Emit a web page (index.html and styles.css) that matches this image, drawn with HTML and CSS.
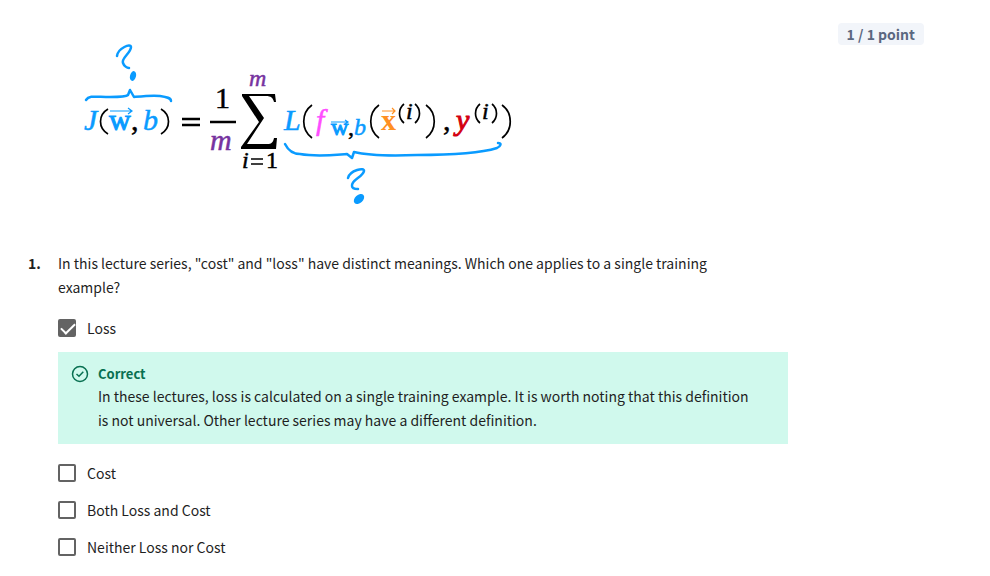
FILE: index.html
```html
<!DOCTYPE html>
<html lang="en">
<head>
<meta charset="utf-8">
<meta name="viewport" content="width=device-width, initial-scale=1">
<title>Practice quiz</title>
<link rel="stylesheet" href="styles.css">
</head>
<body>
<main class="quiz">
  <header class="top">
    <svg class="formula" viewBox="58 23 480 192" width="480" height="192" role="img" aria-label="Cost function J as the average of the losses L">
      <g class="ink">
        <path d="M117 56C118 48 131 43 131 47C131 53 121 58 123 63C124 66 127 68 129 68"/>
        <path d="M86 100C89 95 96 97 110 97C118 97 126 97 128 95L130 90L134 97C144 96 153 95 160 96C167 97 171 98 171 101"/>
        <path d="M285 144C288 150 293 154 300 154C317 157 333 155 347 154L352 158L354 152C366 155 390 156 417 155C451 155 481 153 497 148C501 146 502 143 498 143"/>
        <path d="M348 178C350 170 365 167 364 171C363 177 351 180 352 186C352 188 355 189 358 189"/>
      </g>
      <ellipse class="blue" cx="133" cy="76" rx="3" ry="5" transform="rotate(15 133 76)"/>
      <ellipse class="blue" cx="359" cy="199" rx="4" ry="6" transform="rotate(48 359 199)"/>
      <g class="arrow">
        <path d="M110 111H132M128 108L132 111L128 114"/>
        <path d="M331 122H348M345 120L348 122L345 124"/>
        <path class="arrow-orange" d="M382 111H395M392 108L395 111L392 114"/>
      </g>
      <g class="math">
        <text class="it blue" x="84" y="130">J</text>
        <text class="up blue" x="109" y="130">w</text>
        <text x="131" y="130">,</text>
        <text class="it blue" x="143" y="130">b</text>
        <text x="215" y="108">1</text>
        <text class="it purple" x="210" y="150">m</text>
        <text class="it purple sub" x="249" y="86">m</text>
        <text class="it sub" x="242" y="168">i</text>
        <text class="sub" x="266" y="168">1</text>
        <text class="it blue" x="284" y="130">L</text>
        <text class="it pink" x="316" y="130">f</text>
        <text class="up blue sub" x="331" y="135">w</text>
        <text class="sub" x="348" y="135">,</text>
        <text class="it blue sub" x="354" y="135">b</text>
        <text class="bd orange" x="381" y="130">x</text>
        <text class="it sub" x="406" y="119">i</text>
        <text x="443" y="130">,</text>
        <text class="it red" x="456" y="130">y</text>
        <text class="it sub" x="482" y="119">i</text>
      </g>
      <path class="fence" d="M108 109C98 115 98 128 108 134M161 109C171 115 171 128 161 134M312 105C301 113 301 130 312 138M379 105C368 113 368 130 379 138M426 105C437 113 437 130 426 138M502 105C513 113 513 130 502 138M404 104C398 109 398 118 404 123M415 104C421 109 421 118 415 123M480 104C474 109 474 118 480 123M492 104C498 109 498 118 492 123"/>
      <path class="rules" d="M182 119H200M182 125H200M210 122H236"/>
      <path class="fence" d="M251 159H263M251 164H263"/>
      <path d="M242 94H275L276 102H274C273 98 271 96 266 96H249L264 118L247 144H267C272 144 273 142 274 138H277L276 149H241V147L259 122L242 96Z"/>
    </svg>
    <span class="points">1 / 1 point</span>
  </header>

  <section class="question">
    <span class="number">1.</span>
    <fieldset class="body">
      <legend>In this lecture series, "cost" and "loss" have distinct meanings. Which one applies to a single training example?</legend>
      <label class="option"><input type="checkbox" checked>Loss</label>
      <div class="feedback">
        <svg class="tick" viewBox="0 0 18 18" width="18" height="18" aria-hidden="true"><circle cx="9" cy="9" r="7.5"/><path d="M5.5 9L8 11.3L12.3 6.7"/></svg>
        <div>
          <strong>Correct</strong>
          <p>In these lectures, loss is calculated on a single training example. It is worth noting that this definition is not universal. Other lecture series may have a different definition.</p>
        </div>
      </div>
      <label class="option"><input type="checkbox">Cost</label>
      <label class="option"><input type="checkbox">Both Loss and Cost</label>
      <label class="option"><input type="checkbox">Neither Loss nor Cost</label>
    </fieldset>
  </section>
</main>
</body>
</html>
```
FILE: styles.css
```css
* { box-sizing: border-box; }
body {
  margin: 0;
  background: #fff;
  color: #1f1f1f;
  font: 14px/24px "Noto Sans CJK SC", "Noto Sans", sans-serif;
}
.quiz { padding: 23px 66px 16px 28px; }
.top {
  display: flex;
  justify-content: space-between;
  align-items: flex-start;
  padding-left: 30px;
  margin-bottom: 36px;
}
.formula { max-width: 100%; height: auto; }
.points {
  padding: 0 9px;
  border-radius: 4px;
  background: #f2f5fa;
  color: #5b6780;
  line-height: 22px;
  font-weight: 700;
  white-space: nowrap;
}
.ink { fill: none; stroke: #0a9bff; stroke-width: 2.5; stroke-linecap: round; stroke-linejoin: round; }
.arrow { fill: none; stroke: #0a9bff; stroke-width: 1.2; }
.arrow .arrow-orange { stroke: #ff9022; }
.math { font-family: "Liberation Serif", serif; font-size: 30px; stroke-width: 0.5; stroke: #000; }
.math .it { font-style: italic; }
.math .up { stroke-width: 1; }
.math .bd { font-weight: 700; stroke: none; }
.math .sub { font-size: 24px; }
.blue { fill: #0a9bff; }
.math .blue { stroke: #0a9bff; }
.math .purple { fill: #7733a0; stroke: #7733a0; }
.math .pink { fill: #ff4dff; stroke: #ff4dff; }
.math .orange { fill: #ff9022; }
.math .red { fill: #d4000f; stroke: #d4000f; stroke-width: 1; }
.fence { fill: none; stroke: #000; stroke-width: 1.7; }
.rules { stroke: #000; stroke-width: 2.5; }

.question { display: flex; }
.number { flex: 0 0 30px; font-weight: 700; }
.body {
  flex: 0 1 730px;
  min-width: 0;
  margin: 0;
  padding: 0;
  border: 0;
}
legend { max-width: 700px; padding: 0; margin-bottom: 17px; }
.option {
  display: flex;
  align-items: center;
  gap: 11px;
  margin-bottom: 13px;
}
.option input {
  appearance: none;
  flex: none;
  width: 18px;
  height: 18px;
  margin: 0;
  border: 2px solid #636363;
  border-radius: 2px;
  background: #fff;
}
.option input:checked { background: #636363; }
.option input:checked::before {
  content: "";
  display: block;
  width: 12px;
  height: 6px;
  margin: 2px 0 0 1px;
  border: solid #fff;
  border-width: 0 0 2px 2px;
  transform: rotate(-45deg);
}
.feedback {
  display: flex;
  gap: 9px;
  margin: -1px 0 17px;
  padding: 12px 13px;
  background: #d0f9ed;
}
.tick { flex: none; margin-top: 1px; fill: none; stroke: #087051; stroke-width: 1.5; }
.feedback strong { display: block; color: #087051; font-size: 13px; line-height: 20px; }
.feedback p { max-width: 660px; margin: 0; }
```
